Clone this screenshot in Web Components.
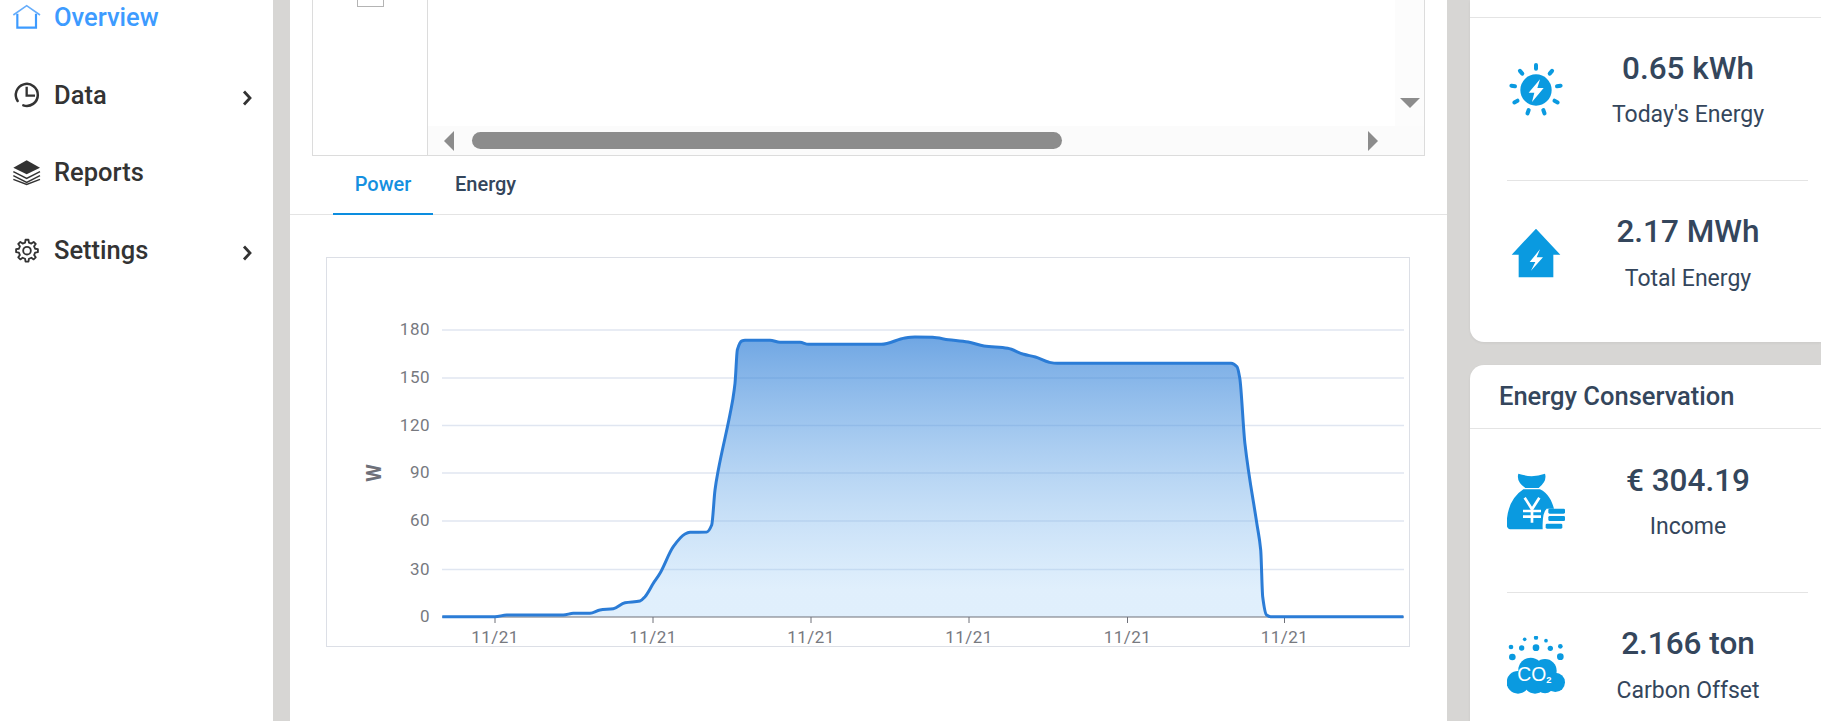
<!DOCTYPE html>
<html><head><meta charset="utf-8">
<style>
html,body{margin:0;padding:0;height:721px;overflow:hidden;background:#d7d6d4;font-family:Roboto,"Liberation Sans",sans-serif}
</style></head>
<body>
<solar-page>
  <side-nav slot="nav">
    <nav-item active label="Overview"><solar-icon name="home"></solar-icon></nav-item>
    <nav-item label="Data" arrow><solar-icon name="clock"></solar-icon></nav-item>
    <nav-item label="Reports"><solar-icon name="layers"></solar-icon></nav-item>
    <nav-item label="Settings" arrow><solar-icon name="gear"></solar-icon></nav-item>
  </side-nav>
  <main-panel slot="main">
    <grid-stub></grid-stub>
    <tab-bar></tab-bar>
    <power-chart></power-chart>
  </main-panel>
  <side-column slot="side">
    <stat-card stub>
      <stat-row value="0.65 kWh" label="Today's Energy"><solar-icon name="sun"></solar-icon></stat-row>
      <stat-row value="2.17 MWh" label="Total Energy"><solar-icon name="bolthouse"></solar-icon></stat-row>
    </stat-card>
    <stat-card title="Energy Conservation">
      <stat-row value="€ 304.19" label="Income"><solar-icon name="money"></solar-icon></stat-row>
      <stat-row value="2.166 ton" label="Carbon Offset"><solar-icon name="co2"></solar-icon></stat-row>
    </stat-card>
  </side-column>
</solar-page>
<script>
function def(name, css, html){
  customElements.define(name, class extends HTMLElement{
    connectedCallback(){
      if(this.shadowRoot) return;
      const r=this.attachShadow({mode:'open'});
      r.innerHTML='<style>'+css+'</style>'+(typeof html==='function'?html(this):html);
    }
  });
}
const esc=s=>(s||'').replace(/&/g,'&amp;').replace(/</g,'&lt;');

def('solar-page',
 ':host{display:grid;grid-template-columns:273px 1174px 374px;height:721px;overflow:hidden;background:#d7d6d4;color:#333}'+
 '::slotted([slot=main]){margin-left:17px}::slotted([slot=side]){margin-left:23px}',
 '<slot name="nav"></slot><slot name="main"></slot><slot name="side"></slot>');

const svg=(vb,body,size)=>`<svg xmlns="http://www.w3.org/2000/svg" viewBox="${vb}" width="${size}" height="${size}">${body}</svg>`;
function sunRays(){let s='';for(let i=0;i<9;i++){s+=`<line x1="708" y1="${270-64}" x2="708" y2="${270-75}" transform="rotate(${i*40} 708 270)"/>`;}return s;}
function dots(list){return list.map(d=>`<circle cx="${d[0]}" cy="${d[1]}" r="${d[2]}"/>`).join('');}
function gearPath(cx,cy,ro,ri,n){
  let p='';const st=Math.PI*2/n;
  for(let i=0;i<n;i++){
    const a=i*st-Math.PI/2;
    const pt=(r,t)=>(cx+r*Math.cos(a+t*st)).toFixed(1)+' '+(cy+r*Math.sin(a+t*st)).toFixed(1);
    p+=(i?'L':'M')+pt(ri,-.3)+'L'+pt(ro,-.17)+'L'+pt(ro,.17)+'L'+pt(ri,.3);
  }
  return p+'Z';
}
const ICON_HTML={
 home:svg('33 0 93 93','<path d="M40 42 80 14 120 42" fill="none" stroke="#66adfb" stroke-width="5"/><path d="M52 38V80H108V38" fill="none" stroke="#3d9bff" stroke-width="6.5"/>',31),
 clock:svg('33 235 93 93','<path d="M53 301A33 33 0 1 1 70 314" fill="none" stroke="#333" stroke-width="7.5" stroke-linecap="round"/><path d="M80 258V285H105" fill="none" stroke="#333" stroke-width="7"/>',31),
 layers:svg('33 468 93 93','<path d="M80 478 120 500 80 520 40 500Z" fill="#333"/><path d="M40 512 80 532 120 512M40 524 80 544 120 524M40 535 80 550 120 535" fill="none" stroke="#333" stroke-width="4.5"/>',31),
 gear:svg('33 708 93 93',`<g fill="none" stroke="#333" stroke-width="5.5" stroke-linejoin="round"><path d="${gearPath(81,755,33,25,8)}"/><circle cx="81" cy="755" r="11.5"/></g>`,31),
 sun:svg('621 183 174 174',`<g stroke="#0a9ae0" stroke-width="12" stroke-linecap="round">${sunRays()}</g><circle cx="708" cy="270" r="47" fill="#0a9ae0"/><path d="M720 238 686 278H703L696 306 731 264H712Z" fill="#fff"/>`,58),
 bolthouse:svg('621 672 174 174','<path d="M708 686 781 764H760V832H656V764H635Z" fill="#0a9ae0"/><path d="M720 748 689 786H706L693 812 729 772H710Z" fill="#fff"/>',58),
 money:svg('51 39 174 174','<path d="M85 41Q105 47 125 49 145 47 165 41 172 64 146 84H106Q78 64 85 41Z" fill="#0a9ae0"/><path d="M100 88H150C174 98 186 124 192 146H170Q156 158 158 208H64Q48 208 50 186 54 118 100 88Z" fill="#0a9ae0"/><g stroke="#fff" stroke-width="8" fill="none"><path d="M104 113 126 148 148 113M126 148V188M99 153H153M99 170H153"/></g><g fill="#0a9ae0"><rect x="175" y="146" width="50" height="15" rx="4"/><rect x="175" y="168" width="50" height="15" rx="4"/><rect x="167" y="191" width="50" height="15" rx="4"/></g>',58),
 co2:svg('51 33 174 174',`<g fill="#0a9ae0">${dots([[104,43,5.5],[138,38,6.5],[168,47,5.5],[63,66,7],[95,69,8],[138,68,10],[181,70,8],[211,64,7],[67,96,10],[211,95,10]])}${dots([[84,172,34],[122,135,37],[165,137,35],[196,172,29],[135,172,34],[165,180,25]])}</g><text x="133" y="168" text-anchor="middle" font-family="Liberation Sans,Arial,sans-serif" font-size="58" fill="#fff">CO<tspan font-size="28" dy="6" font-weight="700">2</tspan></text>`,58)
};
def('solar-icon',':host{display:block;line-height:0}svg{display:block}',h=>ICON_HTML[h.getAttribute('name')]);

def('side-nav',':host{display:block;background:#fff;height:721px;overflow:hidden}div{margin-top:-22px}','<div><slot></slot></div>');
def('nav-item',
 ':host{display:flex;align-items:center;height:77.8px;color:#333;font-size:25.5px;font-weight:500}'+
 ':host([active]){color:#3d9bff}'+
 '.i{width:31px;margin-left:11px;margin-right:12px}'+
 '.a{margin-left:auto;margin-right:21px;width:10px;height:18px;margin-top:6px}.l{flex:none}',
 h=>`<span class="i"><slot></slot></span><span class="l">${esc(h.getAttribute('label'))}</span>`+
    (h.hasAttribute('arrow')?'<svg class="a" viewBox="0 0 10 18"><path d="M2 2.5 8 9 2 15.5" fill="none" stroke="#333" stroke-width="2.8"/></svg>':''));

def('main-panel',':host{display:flex;flex-direction:column;background:#fff;height:721px;overflow:hidden;width:1157px}','<slot></slot>');
def('grid-stub',
 ':host{display:grid;grid-template-columns:114px 1px 1fr;height:156px;margin:0 22px;border:solid #dcdcdc;border-width:0 1px 1px;box-sizing:border-box;flex:none;width:1113px}'+
 '.left{display:flex;justify-content:center;align-items:flex-start;overflow:hidden}'+
 '.cb{width:27px;height:27px;box-sizing:border-box;border:1px solid #b4b4b4;margin-top:-20px;flex:none}'+
 '.sep{background:#dcdcdc}'+
 '.body{display:grid;grid-template-columns:1fr 29px;grid-template-rows:126px 29px;min-width:0}'+
 '.view{background:#fff}.v{background:#fcfcfc;display:flex;flex-direction:column;justify-content:flex-end;align-items:center;padding-bottom:18px;box-sizing:border-box}'+
 '.h{background:#fbfbfb;display:flex;align-items:center;padding-left:16px;box-sizing:border-box;grid-column:1}'+
 '.c{background:#fbfbfb}'+
 '.tl{width:0;height:0;border-style:solid;border-width:10px 10px 10px 0;border-color:transparent #8c8c8c transparent transparent}'+
 '.tr{width:0;height:0;border-style:solid;border-width:10px 0 10px 10px;border-color:transparent transparent transparent #8c8c8c;margin-left:306px}'+
 '.th{width:590px;height:17px;border-radius:9px;background:#8c8c8c;margin-left:18px}'+
 '.td{width:0;height:0;border-style:solid;border-width:10px 10px 0;border-color:#8c8c8c transparent transparent}',
 '<div class="left"><div class="cb"></div></div><div class="sep"></div><div class="body"><div class="view"></div><div class="v"><div class="td"></div></div><div class="h"><div class="tl"></div><div class="th"></div><div class="tr"></div></div><div class="c"></div></div>');

def('tab-bar',
 ':host{display:flex;height:58px;border-bottom:1px solid #e4e4e4;flex:none;padding-left:43px;font-size:20px;font-weight:500;color:#34465c}'+
 '.t{display:flex;align-items:center;padding:0 22px 3px;height:59px;box-sizing:border-box}'+
 '.on{color:#1590e0;border-bottom:2px solid #0c8ddf;width:100px;justify-content:center;padding:0 0 1px}',
 '<div class="t on">Power</div><div class="t">Energy</div>');

function chartSvg(){
 const z9=(a,b)=>[320+a/3,250+b/3], z10=(a,b)=>[820+a/2.53,250+b/3];
 const pts=[[367,1100],[525,1100],[560,1095],[730,1095],[760,1090],[810,1090],[840,1080],[880,1076],[915,1058],[960,1053],[975,1040],[1000,1000],[1020,970],[1060,890],[1095,852],[1110,847],[1160,846],[1175,825],[1185,720],[1195,660],[1238,450],[1245,400],[1252,300],[1265,273],[1275,271],[1350,271],[1380,277],[1440,277],[1465,283]].map(p=>z9(p[0],p[1]))
 .concat([[155,283],[215,264],[240,261],[285,262],[325,269],[375,276],[415,288],[475,295],[515,313],[545,321],[580,337],[600,340],[1040,340],[1055,350],[1062,385],[1075,580],[1105,820],[1115,900],[1120,1040],[1130,1095],[1140,1100],[1476,1100]].map(p=>z10(p[0],p[1])));
 const n=pts.length,d=[],m=[];
 for(let i=0;i<n-1;i++)d[i]=(pts[i+1][1]-pts[i][1])/(pts[i+1][0]-pts[i][0]);
 m[0]=d[0];m[n-1]=d[n-2];
 for(let i=1;i<n-1;i++){m[i]=d[i-1]*d[i]<=0?0:2*d[i-1]*d[i]/(d[i-1]+d[i]);}
 let line='M'+pts[0][0].toFixed(1)+' '+pts[0][1].toFixed(1);
 for(let i=0;i<n-1;i++){
  const [x0,y0]=pts[i],[x1,y1]=pts[i+1],h=(x1-x0)/3;
  line+=`C${(x0+h).toFixed(1)} ${(y0+m[i]*h).toFixed(1)} ${(x1-h).toFixed(1)} ${(y1-m[i+1]*h).toFixed(1)} ${x1.toFixed(1)} ${y1.toFixed(1)}`;
 }
 const ys=[[180,330],[150,378],[120,425.5],[90,473],[60,521],[30,569.5]];
 const xs=[495,653,811,969,1127.5,1284.5];
 let s='<svg xmlns="http://www.w3.org/2000/svg" viewBox="327 258 1082 388" width="1082" height="388"><defs><linearGradient id="g" gradientUnits="userSpaceOnUse" x1="0" y1="336" x2="0" y2="590"><stop offset="0" stop-color="rgb(43,124,214)" stop-opacity=".68"/><stop offset="1" stop-color="rgb(152,202,245)" stop-opacity=".3"/></linearGradient></defs>';
 ys.forEach(y=>{s+=`<line x1="442" x2="1404" y1="${y[1]}" y2="${y[1]}" stroke="#e0e6f1" stroke-width="1.5"/>`;});
 s+=`<path d="${line}L1404 617L442 617Z" fill="url(#g)"/>`;
 s+='<line x1="442" x2="1404" y1="617" y2="617" stroke="#6e7079" stroke-width="1.2"/>';
 xs.forEach(x=>{s+=`<line x1="${x}" x2="${x}" y1="617" y2="623" stroke="#6e7079" stroke-width="1"/>`;});
 s+=`<path d="${line}" fill="none" stroke="#2b7cd6" stroke-width="3"/>`;
 s+='<g font-family="Roboto,sans-serif" font-size="17" fill="#77797f" letter-spacing=".5">';
 ys.concat([[0,617]]).forEach(y=>{s+=`<text x="430" y="${y[1]+5}" text-anchor="end">${y[0]}</text>`;});
 xs.forEach(x=>{s+=`<text x="${x}" y="643" text-anchor="middle">11/21</text>`;});
 s+='</g><text transform="translate(381 473) rotate(-90)" text-anchor="middle" font-family="Roboto,sans-serif" font-weight="700" font-size="20" fill="#6e7079">W</text></svg>';
 return s;
}
def('power-chart',
 ':host{display:block;margin:42px 37px 0 36px;height:388px;border:1px solid #dcdfe6;flex:none;line-height:0}svg{display:block}',
 ()=>chartSvg());

def('side-column',':host{display:flex;flex-direction:column;gap:23px;width:351px}','<slot></slot>');
def('stat-card',
 ':host{display:block;background:#fff;border-radius:14px 0 0 14px;box-shadow:0 1px 3px rgba(0,0,0,.06)}'+
 ':host([stub]){border-top-left-radius:0}'+
 '.stub{height:17px;border-bottom:1px solid #e4e4e4}'+
 '.title{height:63px;line-height:63px;padding-left:29px;font-size:25.5px;font-weight:500;color:#34465c;border-bottom:1px solid #e4e4e4;white-space:nowrap;margin-bottom:1px}',
 h=>(h.hasAttribute('stub')?'<div class="stub"></div>':`<div class="title">${esc(h.getAttribute('title'))}</div>`)+'<slot></slot>');
def('stat-row',
 ':host{display:flex;margin:0 13px 0 37px;height:162px;box-sizing:border-box;border-top:1px solid #e4e4e4}'+
 ':host(:first-of-type){border-top:0}'+
 '.i{width:58px;margin-top:43px;flex:none;margin-right:3px}'+
 '.t{flex:1;text-align:center;padding-top:31px;color:#34465c}'+
 '.v{font-size:31.5px;font-weight:500;line-height:40px;white-space:nowrap}'+
 '.l{font-size:23px;line-height:28px;margin-top:12px;white-space:nowrap}'+
 ':host(:last-of-type) .l{margin-top:13px}',
 h=>`<div class="i"><slot></slot></div><div class="t"><div class="v">${esc(h.getAttribute('value'))}</div><div class="l">${esc(h.getAttribute('label'))}</div></div>`);
</script>
</body></html>
